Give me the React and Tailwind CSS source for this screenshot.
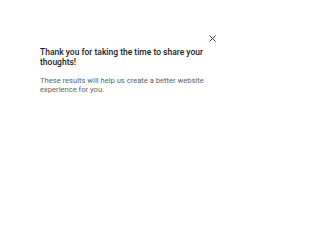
export default function App() {
  return (
    <div className="w-[250px] h-[200px] bg-white" style={{ fontFamily: "Roboto, sans-serif" }}>
      <div className="pt-[35px] pl-[40px] pr-[34px]">
        <div className="flex justify-end">
          <svg width="7" height="7" viewBox="0 0 7 7">
            <path d="M0.5 0.5L6.5 6.5M6.5 0.5L0.5 6.5" stroke="#3c4043" strokeWidth="1" />
          </svg>
        </div>
        <h2 className="mt-[5px] text-[8.5px] leading-[10px] font-medium text-[#202124]">
          Thank you for taking the time to share your thoughts!
        </h2>
        <p className="mt-[8.5px] text-[7.6px] leading-[9.5px] text-[#5c5f63]">
          These results will help us create a better website experience for you.
        </p>
      </div>
    </div>
  );
}
